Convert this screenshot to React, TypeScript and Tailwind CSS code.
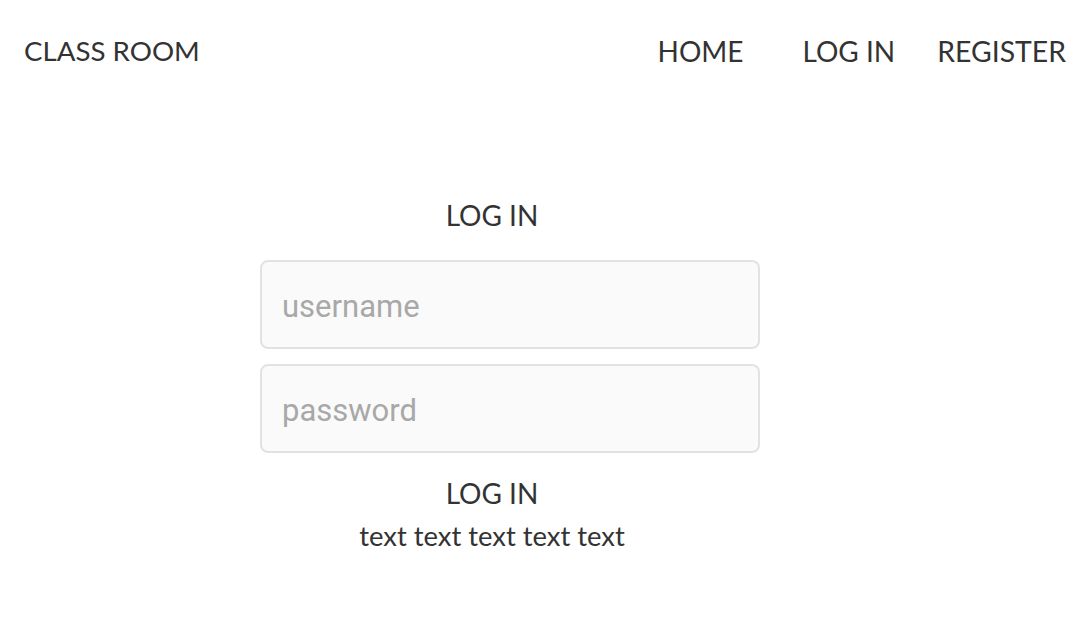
export default function App() {
  return (
    <div className="min-h-[640px] w-[1080px] bg-white text-[#333] font-['Lato','Liberation_Sans',sans-serif]">
      <header className="flex items-center justify-between pl-6 pr-[14px] pt-[33px]">
        <div className="text-[27.7px] leading-[36px]">CLASS ROOM</div>
        <nav className="flex text-[28px] leading-[36px]">
          <a className="mr-[59px]">HOME</a>
          <a className="mr-[42px]">LOG IN</a>
          <a className="text-[28.4px]">REGISTER</a>
        </nav>
      </header>

      <main className="flex flex-col items-center pr-[96px] pt-[128px]">
        <h1 className="text-[28px] leading-[36px]">LOG IN</h1>
        <input
          placeholder="username"
          className="ml-[36px] mt-[27px] h-[89px] w-[500px] rounded-lg border-2 border-[#e2e2e2] bg-[#fafafa] px-5 pt-1 font-['Roboto',sans-serif] text-[31px] placeholder:text-[#a8a8a8] outline-none"
        />
        <input
          type="password"
          placeholder="password"
          className="ml-[36px] mt-[15px] h-[89px] w-[500px] rounded-lg border-2 border-[#e2e2e2] bg-[#fafafa] px-5 pt-1 font-['Roboto',sans-serif] text-[31px] placeholder:text-[#a8a8a8] outline-none"
        />
        <button className="mt-[22px] text-[28px] leading-[36px]">LOG IN</button>
        <p className="mt-[8px] text-[27.4px] leading-[34px]">text text text text text</p>
      </main>
    </div>
  )
}
